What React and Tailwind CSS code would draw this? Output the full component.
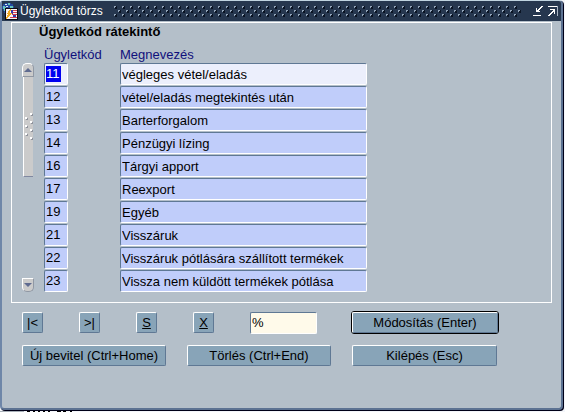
import React, { useState } from 'react';

const initialRows = [
  { code: '11', name: 'végleges vétel/eladás' },
  { code: '12', name: 'vétel/eladás megtekintés után' },
  { code: '13', name: 'Barterforgalom' },
  { code: '14', name: 'Pénzügyi lízing' },
  { code: '16', name: 'Tárgyi apport' },
  { code: '17', name: 'Reexport' },
  { code: '19', name: 'Egyéb' },
  { code: '21', name: 'Visszáruk' },
  { code: '22', name: 'Visszáruk pótlására szállított termékek' },
  { code: '23', name: 'Vissza nem küldött termékek pótlása' },
];

const field =
  'block h-[22px] rounded-[2px] border border-t-[#5f7894] border-l-[#5f7894] border-r-white border-b-white pl-px text-[13px] leading-4 text-black outline-none';

const button =
  'h-[21px] rounded-[2px] border border-t-white border-l-white border-r-[#5f7894] border-b-[#5f7894] bg-[#88a4b8] text-[13px] leading-4 text-black text-center whitespace-nowrap';

const AppIcon = () => (
  <svg width="16" height="17" viewBox="0 0 16 17" shapeRendering="crispEdges" className="shrink-0">
    <path d="M3 0h6v1h2v2h1v3H4v4H2V8H1V6H0V3h1V1h2z" fill="#2448a0" />
    <path d="M1 3h2v1h1v2H3v2H2V6H1zM6 0h2v2H6zM8 3h3v2H8z" fill="#64c4bc" />
    <path d="M3 1h2v1H3zM4 3h2v1H4z" fill="#d4eef0" />
    <path d="M3 5h13v12H3z" fill="#0c0c14" />
    <path d="M4 6h11v10H4z" fill="#f8f4f4" />
    <path d="M9 7h2v4H9zM11 12h3v2h-3z" fill="#3838a8" />
    <path d="M11 7h4v1h-4zM11 9h4v1h-4zM10 11h5v1h-5zM8 14h7v1H8z" fill="#d04050" />
    <path d="M8 6h1v2H8v2h2v1H9v1H8v1H7v1H6v1H5v1H4v-2h1v-2h1v-1H5v-1h1V8h1V7h1z" fill="#f0a820" />
  </svg>
);

const MinimizeIcon = () => (
  <svg width="12" height="12" viewBox="0 0 12 12" shapeRendering="crispEdges" fill="#fff">
    <path d="M2 10h8v1H2z" />
    <path d="M5 3h1v3h3v1H5z" />
    <path d="M6 5h1V4h1V3h1V2h1V1h2v1h-1v1h-1v1H9v1H8v1h1v1H6z" />
  </svg>
);

const MaximizeIcon = () => (
  <svg width="12" height="12" viewBox="0 0 12 12" shapeRendering="crispEdges" fill="#fff">
    <path d="M1 1h10v1H1z" />
    <path d="M10 1h1v10h-1z" fill="#a8b4c4" />
    <path d="M3 4h5v5H7V7H6v1H5v1H4v1H3v1H1v-1h1V9h1V8h1V7h1V6h1V5H3z" />
  </svg>
);

// Raised dots that fill the rest of the title bar
const Grip = () => (
  <svg className="h-[12px] min-w-0 flex-1" shapeRendering="crispEdges" aria-hidden="true">
    <defs>
      <pattern id="dots" width="8" height="8" patternUnits="userSpaceOnUse">
        <path d="M1 1h2v1H1zM5 5h2v1H5zM1 2h1v1H1zM5 6h1v1H5z" fill="#93a5b9" />
        <path d="M2 2h1v1H2zM3 1h1v2H3zM2 3h2v1H2zM6 6h1v1H6zM7 5h1v2H7zM6 7h2v1H6z" fill="#0a1424" />
      </pattern>
    </defs>
    <rect width="100%" height="12" fill="url(#dots)" />
  </svg>
);

const Scrollbar = () => (
  <div className="flex w-[12px] flex-col justify-between">
    <div className="flex flex-col items-center">
      <button aria-label="Fel" className="flex h-[14px] w-[12px] items-center justify-center rounded-t-[5px] border border-t-white border-l-white border-r-[#9098a4] border-b-[#9098a4] bg-[#cbcbcb]">
        <svg width="8" height="4" viewBox="0 0 8 4"><path d="M4 0l4 4H0z" fill="#5f6b90" /></svg>
      </button>
      <div className="flex h-[100px] w-[10px] items-center justify-center border-l border-b border-l-white border-b-[#8088a0] bg-[#cbcbcb]">
        <svg width="8" height="28" viewBox="0 0 8 28" shapeRendering="crispEdges">
          <defs>
            <pattern id="thumb" width="8" height="8" patternUnits="userSpaceOnUse">
              <path d="M5 0h2v2H5zM0 4h2v2H0z" fill="#fff" />
              <path d="M7 1h1v2H6V2h1zM2 5h1v2H1V6h1z" fill="#8f939c" />
            </pattern>
          </defs>
          <rect width="8" height="28" fill="url(#thumb)" />
        </svg>
      </div>
    </div>
    <button aria-label="Le" className="flex h-[14px] w-[12px] items-center justify-center rounded-b-[5px] border border-t-white border-l-white border-r-[#9098a4] border-b-[#9098a4] bg-[#cbcbcb]">
      <svg width="8" height="4" viewBox="0 0 8 4"><path d="M0 0h8L4 4z" fill="#5f6b90" /></svg>
    </button>
  </div>
);

const App = () => {
  const [rows, setRows] = useState(initialRows);
  const [filter, setFilter] = useState('%');

  const update = (index, key, value) => {
    setRows(rows.map((r, i) => (i === index ? { ...r, [key]: value } : r)));
  };

  return (
    <div className="min-h-screen bg-[#f4f6fa] font-['Liberation_Sans',Arial,sans-serif] text-[13px] leading-4 text-black">
      <div className="mr-0.5 flex flex-col rounded-[4px] border-t border-r-2 border-b-2 border-l-2 border-t-[#c0d4e0] border-r-[#5c7292] border-b-[#5c7292] border-l-[#6e86a8] bg-[#b4bfc9] pb-[42px] shadow-[1px_1px_0_#000018]">
        {/* Title bar */}
        <header className="flex h-5 items-center gap-0.5 rounded-tr-[2px] bg-[#26374f] pr-0.5">
          <AppIcon />
          <h1 className="pr-2 text-xs whitespace-nowrap text-white">Ügyletkód törzs</h1>
          <Grip />
          <div className="flex gap-1 pl-2">
            <button aria-label="Kis méret"><MinimizeIcon /></button>
            <button aria-label="Teljes méret"><MaximizeIcon /></button>
          </div>
        </header>

        {/* Records */}
        <section className="mt-px mr-[9px] ml-[9px] border border-white pb-[9px]">
          <h2 className="pl-[27px] text-[13px] leading-[18px] font-bold">Ügyletkód rátekintő</h2>
          <div className="flex pt-1.5 pl-[10px]">
            <div className="flex pt-4 pb-px">
              <Scrollbar />
            </div>
            <table className="ml-[10px] border-collapse">
              <thead>
                <tr className="h-4 text-left text-[#10107c]">
                  <th className="w-[76px] p-0 font-normal">Ügyletkód</th>
                  <th className="p-0 font-normal">Megnevezés</th>
                </tr>
              </thead>
              <tbody>
                {rows.map((row, i) => (
                  <tr key={i} className="h-[23px] align-top">
                    <td className="p-0">
                      <div className={`${field} flex w-6 items-center ${i === 0 ? 'bg-[#eceffc]' : 'bg-[#c0cdfa]'}`}>
                        <input
                          aria-label={`Ügyletkód ${i + 1}`}
                          value={row.code}
                          onChange={(e) => update(i, 'code', e.target.value)}
                          className={
                            i === 0
                              ? 'h-4 w-[15px] bg-[#0000f0] text-white outline-none'
                              : 'h-4 w-full bg-transparent outline-none'
                          }
                        />
                      </div>
                    </td>
                    <td className="p-0">
                      <input
                        aria-label={`Megnevezés ${i + 1}`}
                        value={row.name}
                        onChange={(e) => update(i, 'name', e.target.value)}
                        className={`${field} w-[247px] ${i === 0 ? 'bg-[#eceffc]' : 'bg-[#c0cdfa]'}`}
                      />
                    </td>
                  </tr>
                ))}
              </tbody>
            </table>
          </div>
        </section>

        {/* Actions */}
        <div className="flex items-center pt-2 pl-5">
          <div className="flex gap-9">
            <button className={`${button} w-[21px]`}>|&lt;</button>
            <button className={`${button} w-[21px]`}>&gt;|</button>
            <button className={`${button} w-[21px]`}><u>S</u></button>
            <button className={`${button} w-[21px]`}><u>X</u></button>
          </div>
          <input
            aria-label="Szűrő"
            value={filter}
            onChange={(e) => setFilter(e.target.value)}
            className={`${field} ml-9 w-[67px] bg-[#fffaea]`}
          />
          <div className="ml-[34px] rounded-[3px] border border-black">
            <button className={`${button} block w-[146px]`}>Módosítás (Enter)</button>
          </div>
        </div>
        <div className="flex gap-[21px] pt-[11px] pl-5">
          <button className={`${button} w-36`}>Új bevitel (Ctrl+Home)</button>
          <button className={`${button} w-36`}>Törlés (Ctrl+End)</button>
          <button className={`${button} w-[145px]`}>Kilépés (Esc)</button>
        </div>
      </div>
      {/* Edge of the sheet lying under the window */}
      <svg className="mt-px block h-px w-full" shapeRendering="crispEdges" aria-hidden="true">
        <path d="M0 0h24v1H0z" fill="#a8b0b8" />
        <path d="M27 0h3v1h-3zM33 0h2v1h-2zM38 0h2v1h-2zM43 0h2v1h-2zM48 0h2v1h-2zM57 0h4v1h-4zM63 0h3v1h-3zM70 0h2v1h-2z" fill="#000" />
      </svg>
    </div>
  );
};

export default App;
